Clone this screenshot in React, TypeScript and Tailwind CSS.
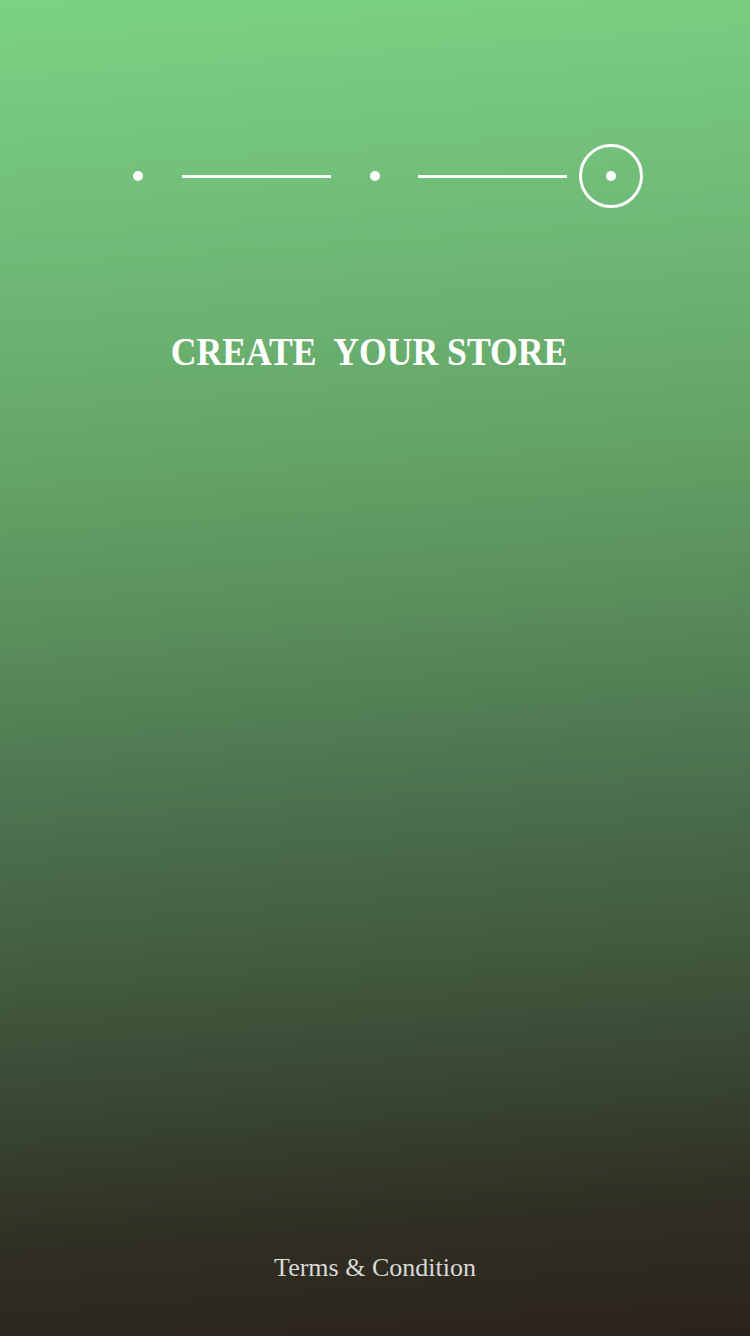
const Dot = () => <div className="w-[10px] h-[10px] rounded-full bg-white" />;

const Line = () => <div className="w-[149px] h-[3px] bg-white" />;

export default function App() {
  return (
    <div className="w-[750px] h-[1336px] flex flex-col items-center bg-[linear-gradient(176deg,#7bd283_0%,#70bb77_18%,#66a769_32%,#5a8e5b_46%,#4d7450_58%,#435c40_70%,#394733_80%,#302f23_90%,#2b231b_100%)]">
      <div className="mt-[144px] flex items-center h-[64px]">
        <div className="ml-[26px]"><Dot /></div>
        <div className="ml-[39px]"><Line /></div>
        <div className="ml-[39px]"><Dot /></div>
        <div className="ml-[38px]"><Line /></div>
        <div className="ml-[12px] w-[64px] h-[64px] rounded-full border-[3px] border-white flex items-center justify-center">
          <Dot />
        </div>
      </div>

      <h1 className="mt-[119px] mr-[12px] whitespace-pre text-white font-bold text-[41px] leading-[48px] scale-x-[0.87] font-['Liberation_Serif',serif]">
        CREATE  YOUR STORE
      </h1>

      <div className="flex-1" />

      <p className="mb-[52px] text-[#d9d9d9] text-[26px] leading-[32px] font-['Liberation_Serif',serif]">
        Terms &amp; Condition
      </p>
    </div>
  );
}
